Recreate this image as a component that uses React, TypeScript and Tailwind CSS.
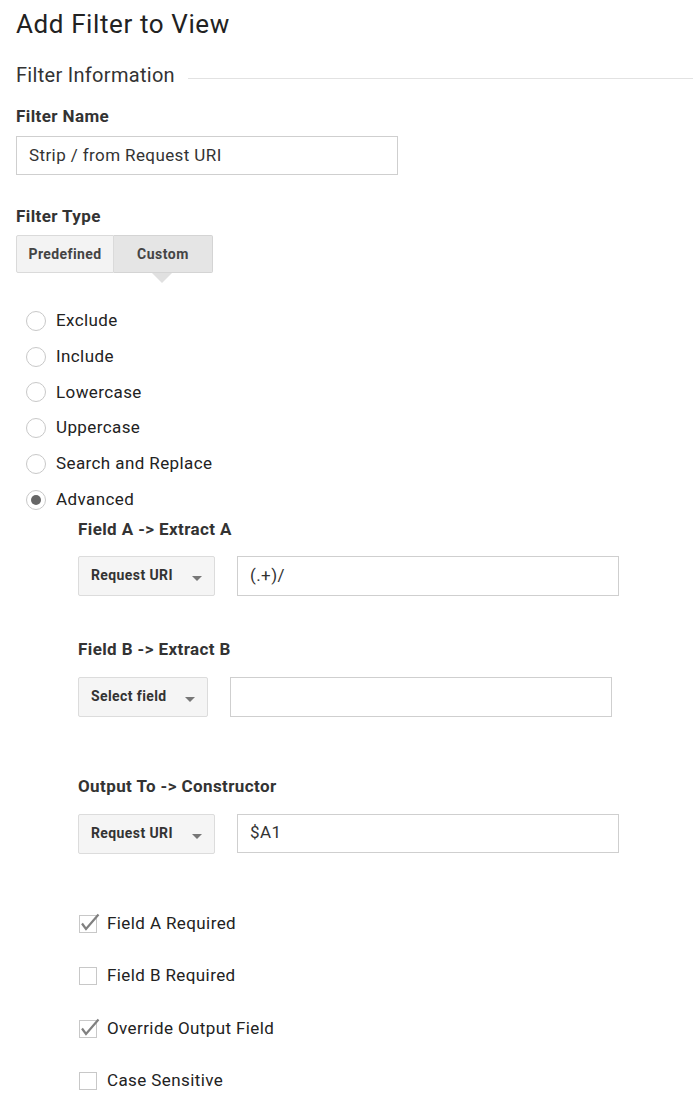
import React from "react";

const font = { fontFamily: "Roboto, 'Liberation Sans', Arial, sans-serif" };

function Caret() {
  return (
    <svg width="10" height="6" viewBox="0 0 10 6" className="mt-[6px]">
      <path d="M0 0 L10 0 L5 5 Z" fill="#777" />
    </svg>
  );
}

function Select({ label, w }: { label: string; w: string }) {
  return (
    <div
      className={`${w} flex h-[40px] items-center justify-between rounded-[2px] border border-[#dcdcdc] bg-[#f5f5f5] pl-[12px] pr-[12px] text-[14px] font-bold tracking-[0.4px] text-[#333]`}
    >
      <span>{label}</span>
      <Caret />
    </div>
  );
}

function TextBox({ value, h = "h-[40px]" }: { value: string; h?: string }) {
  return (
    <div
      className={`flex ${h} w-[382px] items-center border border-[#cfcfcf] bg-white pl-[12px] text-[17px] tracking-[0.4px] text-[#333]`}
    >
      {value}
    </div>
  );
}

function Radio({ label, checked }: { label: string; checked?: boolean }) {
  return (
    <div className="flex h-[35.75px] items-center">
      <div className="ml-[10px] flex h-[20px] w-[20px] items-center justify-center rounded-full border border-[#c8c8c8] bg-white">
        {checked && <div className="h-[10px] w-[10px] rounded-full bg-[#666]" />}
      </div>
      <span className="ml-[10px] text-[17px] tracking-[0.4px] text-[#222]">{label}</span>
    </div>
  );
}

function Check({ label, checked }: { label: string; checked?: boolean }) {
  return (
    <div className="flex h-[24px] items-center">
      <div className="relative ml-[1px] h-[18px] w-[18px] border border-[#c8c8c8] bg-white">
        {checked && (
          <svg
            width="18"
            height="18"
            viewBox="0 0 18 18"
            className="absolute left-[-1px] top-[-1px] overflow-visible"
          >
            <path d="M3 8.5 L7 14 L19.5 -0.5" fill="none" stroke="#808080" strokeWidth="2.2" />
          </svg>
        )}
      </div>
      <span className="ml-[10px] text-[17px] tracking-[0.4px] text-[#222]">{label}</span>
    </div>
  );
}

const bold = "text-[17px] font-bold leading-6 tracking-[0.4px] text-[#333]";

export default function App() {
  return (
    <div className="min-h-[1114px] w-[693px] bg-white pl-[16px]" style={font}>
      <div className="pt-[8px] text-[26px] leading-8 tracking-[0.6px] text-[#222]">Add Filter to View</div>

      <div className="mt-[21px] flex items-start">
        <div className="text-[20px] leading-7 tracking-[0.3px] text-[#333]">Filter Information</div>
        <div className="ml-[13px] mt-[17px] h-px flex-1 bg-[#e2e2e2]" />
      </div>

      <div className={`mt-[15px] ${bold}`}>Filter Name</div>
      <div className="mt-[8px]">
        <TextBox value="Strip / from Request URI" h="h-[39px]" />
      </div>

      <div className={`mt-[29px] ${bold}`}>Filter Type</div>
      <div className="mt-[7px] flex">
        <div className="flex h-[38px] w-[98px] items-center justify-center rounded-l-[2px] border border-[#dadada] bg-[#f3f3f3] text-[14px] font-bold tracking-[0.4px] text-[#444]">
          Predefined
        </div>
        <div className="relative flex h-[38px] w-[99px] items-center justify-center rounded-r-[2px] border border-l-0 border-[#d4d4d4] bg-[#e5e5e5] text-[14px] font-bold tracking-[0.5px] text-[#444]">
          Custom
          <div className="absolute left-[38px] top-[37px] h-0 w-0 border-l-[10px] border-r-[10px] border-t-[10px] border-l-transparent border-r-transparent border-t-[#e0e0e0]" />
        </div>
      </div>

      <div className="mt-[30px] flex flex-col">
        <Radio label="Exclude" />
        <Radio label="Include" />
        <Radio label="Lowercase" />
        <Radio label="Uppercase" />
        <Radio label="Search and Replace" />
        <Radio label="Advanced" checked />
      </div>

      <div className="ml-[62px] flex flex-col">
        <div className={`-mt-[1px] ${bold}`}>Field A -&gt; Extract A</div>
        <div className="mt-[15px] flex gap-[22px]">
          <Select label="Request URI" w="w-[137px]" />
          <TextBox value="(.+)/" />
        </div>

        <div className={`mt-[41px] ${bold}`}>Field B -&gt; Extract B</div>
        <div className="mt-[16px] flex gap-[22px]">
          <Select label="Select field" w="w-[130px]" />
          <TextBox value="" />
        </div>

        <div className={`mt-[57px] ${bold}`}>Output To -&gt; Constructor</div>
        <div className="mt-[16px] flex gap-[22px]">
          <Select label="Request URI" w="w-[137px]" />
          <TextBox value="$A1" h="h-[39px]" />
        </div>

        <div className="mt-[58px] flex flex-col gap-[28.5px]">
          <Check label="Field A Required" checked />
          <Check label="Field B Required" />
          <Check label="Override Output Field" checked />
          <Check label="Case Sensitive" />
        </div>
      </div>
    </div>
  );
}
